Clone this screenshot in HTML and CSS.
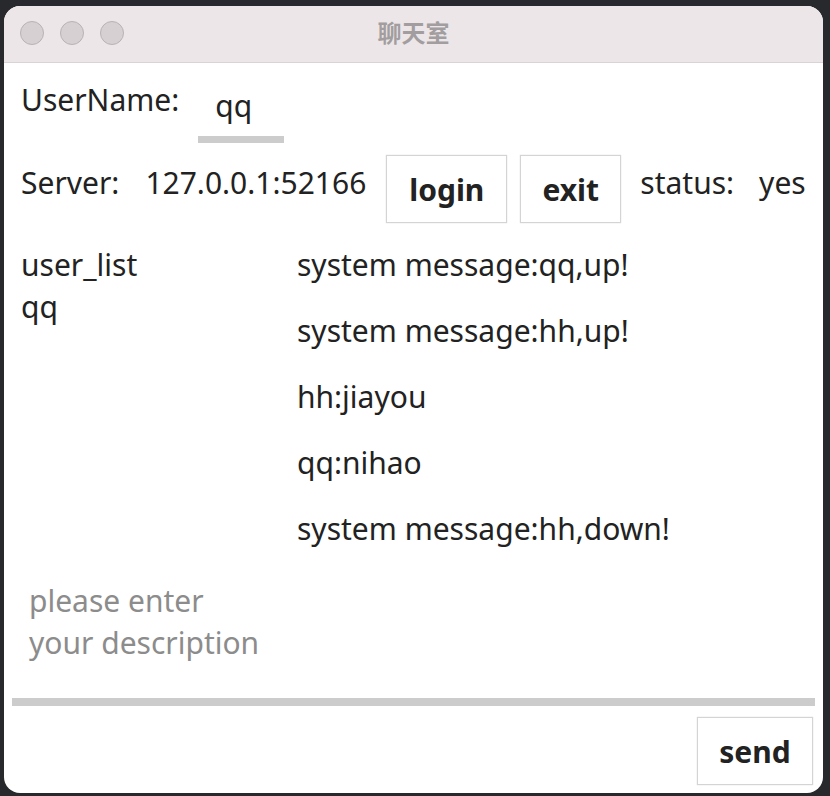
FILE: index.html
```html
<!DOCTYPE html>
<html>
<head>
<meta charset="utf-8">
<link rel="stylesheet" href="styles.css">
</head>
<body>
<div class="window">
  <div class="titlebar">
    <div class="lights"><span class="dot"></span><span class="dot"></span><span class="dot"></span></div>
    <div class="title">聊天室</div>
  </div>
  <div class="content">
    <div class="row user-row">
      <span class="label">UserName:</span>
      <span class="input-name">qq</span>
    </div>
    <div class="row server-row">
      <span class="label">Server:</span>
      <span class="server">127.0.0.1:52166</span>
      <button class="btn login">login</button>
      <button class="btn exit">exit</button>
      <span class="status-label">status:</span>
      <span class="status">yes</span>
    </div>
    <div class="main">
      <div class="users">
        <div class="line">user_list</div>
        <div class="line">qq</div>
      </div>
      <div class="messages">
        <div class="msg">system message:qq,up!</div>
        <div class="msg">system message:hh,up!</div>
        <div class="msg">hh:jiayou</div>
        <div class="msg">qq:nihao</div>
        <div class="msg">system message:hh,down!</div>
      </div>
    </div>
    <div class="desc">please enter<br>your description</div>
    <div class="bar"></div>
    <div class="send-row"><button class="btn send">send</button></div>
  </div>
</div>
</body>
</html>
```

FILE: styles.css
```css
html, body { margin: 0; padding: 0; }
body {
  background: #27292c;
  width: 830px;
  height: 796px;
  overflow: hidden;
  font-family: "Noto Sans", "Open Sans", sans-serif;
  color: #222;
}
.window {
  margin: 6px 0 0 4px;
  width: 819px;
  height: 787px;
  background: #fff;
  border-radius: 16px;
  overflow: hidden;
  display: flex;
  flex-direction: column;
}
.titlebar {
  height: 56px;
  background: #ece6e8;
  border-bottom: 1px solid #d9d3d5;
  display: flex;
  align-items: center;
  position: relative;
  flex-shrink: 0;
}
.lights { display: flex; gap: 16px; padding-left: 16px; padding-bottom: 2px; }
.dot {
  width: 22px; height: 22px;
  border-radius: 50%;
  background: #d7d0d2;
  border: 1px solid #b9b1b4;
}
.title {
  position: absolute;
  left: 0; right: 0; top: 0; bottom: 6px;
  display: flex; align-items: center; justify-content: center;
  font-family: "Noto Sans CJK SC", sans-serif;
  font-weight: bold;
  font-size: 24px;
  color: #a29d9e;
}
.content {
  font-size: 30px;
  line-height: 41px;
  display: flex;
  flex-direction: column;
  padding: 0 0 0 17px;
}
.row { display: flex; align-items: flex-start; }
.user-row { height: 80px; }
.user-row .label { margin-top: 16px; }
.input-name {
  margin-left: 19px;
  width: 86px;
  padding-left: 17px;
  padding-bottom: 10px;
  box-sizing: border-box;
  border-bottom: 7px solid #cccccc;
  margin-top: 22px;
}
.server-row { height: 80px; }
.server-row > span { margin-top: 19px; }
.server-row .server { margin-left: 26px; }
.btn {
  font-family: "Noto Sans", sans-serif;
  font-weight: bold;
  font-size: 30px;
  line-height: 41px;
  color: #222;
  background: #fff;
  border: 1px solid #d4d4d4;
  box-shadow: 0 0 1px #ccc;
  padding: 0;
  height: 68px;
  margin-top: 12px;
}
.login { width: 121px; margin-left: 20px; }
.exit { width: 101px; margin-left: 13px; }
.server-row .status-label { margin-left: 19px; }
.server-row .status { margin-left: 25px; }
.main { display: flex; margin-top: 21px; height: 336px; }
.users { width: 276px; }
.line { line-height: 42px; }
.msg { line-height: 66px; height: 66px; }
.messages { margin-top: -12px; }
.desc {
  color: #8c8c8c;
  line-height: 42px;
  margin-left: 8px;
  height: 118px;
}
.bar {
  height: 8px;
  background: #cccccc;
  margin: 0 8px 0 -9px;
}
.send-row { display: flex; justify-content: flex-end; padding-right: 10px; }
.send { width: 116px; margin-top: 11px; }
```
